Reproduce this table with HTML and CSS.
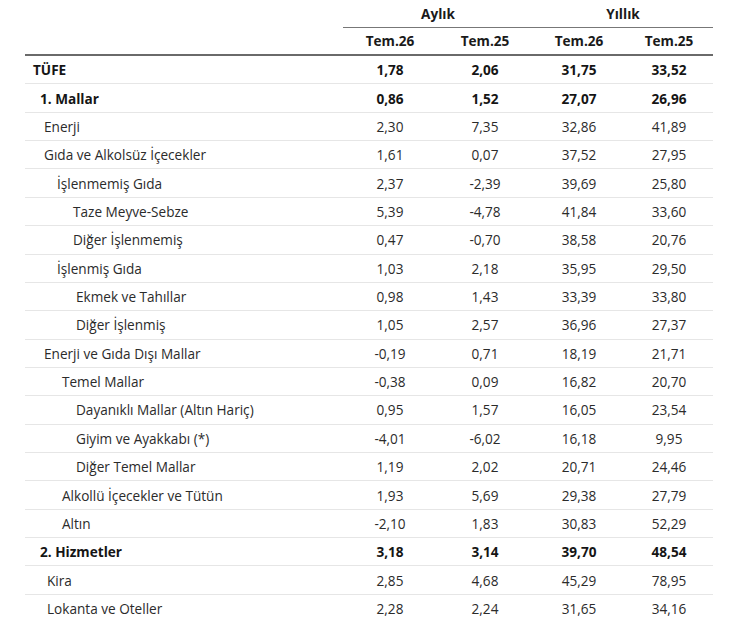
FILE: index.html
```html
<!DOCTYPE html>
<html lang="tr">
<head>
<meta charset="utf-8">
<link rel="stylesheet" href="styles.css">
</head>
<body>
<div class="table">
  <div class="row group-head">
    <div class="label"></div>
    <div class="group">Aylık</div>
    <div class="group">Yıllık</div>
  </div>
  <div class="row sub-head">
    <div class="label"></div>
    <div class="num">Tem.26</div>
    <div class="num">Tem.25</div>
    <div class="num">Tem.26</div>
    <div class="num">Tem.25</div>
  </div>
  <div class="row bold"><div class="label l0">TÜFE</div><div class="num">1,78</div><div class="num">2,06</div><div class="num">31,75</div><div class="num">33,52</div></div>
  <div class="row bold"><div class="label l1">1. Mallar</div><div class="num">0,86</div><div class="num">1,52</div><div class="num">27,07</div><div class="num">26,96</div></div>
  <div class="row"><div class="label l2">Enerji</div><div class="num">2,30</div><div class="num">7,35</div><div class="num">32,86</div><div class="num">41,89</div></div>
  <div class="row"><div class="label l2">Gıda ve Alkolsüz İçecekler</div><div class="num">1,61</div><div class="num">0,07</div><div class="num">37,52</div><div class="num">27,95</div></div>
  <div class="row"><div class="label l3">İşlenmemiş Gıda</div><div class="num">2,37</div><div class="num">-2,39</div><div class="num">39,69</div><div class="num">25,80</div></div>
  <div class="row"><div class="label l4">Taze Meyve-Sebze</div><div class="num">5,39</div><div class="num">-4,78</div><div class="num">41,84</div><div class="num">33,60</div></div>
  <div class="row"><div class="label l4">Diğer İşlenmemiş</div><div class="num">0,47</div><div class="num">-0,70</div><div class="num">38,58</div><div class="num">20,76</div></div>
  <div class="row"><div class="label l3">İşlenmiş Gıda</div><div class="num">1,03</div><div class="num">2,18</div><div class="num">35,95</div><div class="num">29,50</div></div>
  <div class="row"><div class="label l5">Ekmek ve Tahıllar</div><div class="num">0,98</div><div class="num">1,43</div><div class="num">33,39</div><div class="num">33,80</div></div>
  <div class="row"><div class="label l5">Diğer İşlenmiş</div><div class="num">1,05</div><div class="num">2,57</div><div class="num">36,96</div><div class="num">27,37</div></div>
  <div class="row"><div class="label l2">Enerji ve Gıda Dışı Mallar</div><div class="num">-0,19</div><div class="num">0,71</div><div class="num">18,19</div><div class="num">21,71</div></div>
  <div class="row"><div class="label l6">Temel Mallar</div><div class="num">-0,38</div><div class="num">0,09</div><div class="num">16,82</div><div class="num">20,70</div></div>
  <div class="row"><div class="label l5">Dayanıklı Mallar (Altın Hariç)</div><div class="num">0,95</div><div class="num">1,57</div><div class="num">16,05</div><div class="num">23,54</div></div>
  <div class="row"><div class="label l5">Giyim ve Ayakkabı (*)</div><div class="num">-4,01</div><div class="num">-6,02</div><div class="num">16,18</div><div class="num">9,95</div></div>
  <div class="row"><div class="label l5">Diğer Temel Mallar</div><div class="num">1,19</div><div class="num">2,02</div><div class="num">20,71</div><div class="num">24,46</div></div>
  <div class="row"><div class="label l6">Alkollü İçecekler ve Tütün</div><div class="num">1,93</div><div class="num">5,69</div><div class="num">29,38</div><div class="num">27,79</div></div>
  <div class="row"><div class="label l6">Altın</div><div class="num">-2,10</div><div class="num">1,83</div><div class="num">30,83</div><div class="num">52,29</div></div>
  <div class="row bold"><div class="label l1">2. Hizmetler</div><div class="num">3,18</div><div class="num">3,14</div><div class="num">39,70</div><div class="num">48,54</div></div>
  <div class="row"><div class="label l7">Kira</div><div class="num">2,85</div><div class="num">4,68</div><div class="num">45,29</div><div class="num">78,95</div></div>
  <div class="row"><div class="label l7">Lokanta ve Oteller</div><div class="num">2,28</div><div class="num">2,24</div><div class="num">31,65</div><div class="num">34,16</div></div>
</div>
</body>
</html>
```

FILE: styles.css
```css
html, body {
  margin: 0;
  padding: 0;
  background: #ffffff;
}

body {
  font-family: "Open Sans", "Noto Sans", sans-serif;
  font-size: 13.6px;
  color: #2b2b2b;
}

.table {
  margin-left: 25px;
  width: 688px;
}

.row {
  display: grid;
  grid-template-columns: 318px 94px 96px 92px 88px;
  align-items: center;
  box-sizing: border-box;
  height: 28.37px;
  border-bottom: 1px solid #e6e6e6;
}

.group-head {
  grid-template-columns: 318px 190px 180px;
  height: 28px;
  border-bottom: none;
}

.group-head .group {
  text-align: center;
  font-weight: 700;
  color: #1a1a1a;
  border-bottom: 1px solid #777777;
  height: 28px;
  line-height: 27px;
  box-sizing: border-box;
}

.sub-head {
  height: 28px;
  border-bottom: 2px solid #6a6a6a;
  font-weight: 700;
  color: #1a1a1a;
}

.sub-head .num {
  padding-bottom: 1px;
}

.num {
  text-align: center;
  white-space: nowrap;
}

.label {
  white-space: nowrap;
}

.bold {
  font-weight: 700;
  color: #151515;
}

.l0 { padding-left: 8px; }
.l1 { padding-left: 15px; }
.l2 { padding-left: 19px; }
.l3 { padding-left: 32px; }
.l4 { padding-left: 48px; }
.l5 { padding-left: 51px; }
.l6 { padding-left: 37px; }
.l7 { padding-left: 22px; }
```
